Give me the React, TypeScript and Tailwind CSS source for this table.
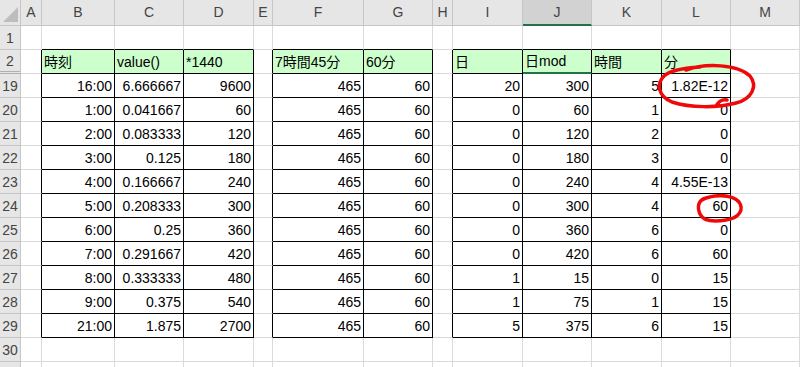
import React from 'react';

const colLetters = ['A', 'B', 'C', 'D', 'E', 'F', 'G', 'H', 'I', 'J', 'K', 'L', 'M'];
const rowLabels = ['1', '2', '19', '20', '21', '22', '23', '24', '25', '26', '27', '28', '29', '30', ''];

// columns that belong to a bordered table, and the column just left of each table
const tableCols = ['B', 'C', 'D', 'F', 'G', 'I', 'J', 'K', 'L'];
const edgeCols = ['A', 'E', 'H'];
const tableRows = ['2', '19', '20', '21', '22', '23', '24', '25', '26', '27', '28', '29'];

const headers: Record<string, string> = {
  B: '時刻',
  C: 'value()',
  D: '*1440',
  F: '7時間45分',
  G: '60分',
  I: '日',
  J: '日mod',
  K: '時間',
  L: '分',
};

const data: Record<string, string[]> = {
  '19': ['16:00', '6.666667', '9600', '465', '60', '20', '300', '5', '1.82E-12'],
  '20': ['1:00', '0.041667', '60', '465', '60', '0', '60', '1', '0'],
  '21': ['2:00', '0.083333', '120', '465', '60', '0', '120', '2', '0'],
  '22': ['3:00', '0.125', '180', '465', '60', '0', '180', '3', '0'],
  '23': ['4:00', '0.166667', '240', '465', '60', '0', '240', '4', '4.55E-13'],
  '24': ['5:00', '0.208333', '300', '465', '60', '0', '300', '4', '60'],
  '25': ['6:00', '0.25', '360', '465', '60', '0', '360', '6', '0'],
  '26': ['7:00', '0.291667', '420', '465', '60', '0', '420', '6', '60'],
  '27': ['8:00', '0.333333', '480', '465', '60', '1', '15', '0', '15'],
  '28': ['9:00', '0.375', '540', '465', '60', '1', '75', '1', '15'],
  '29': ['21:00', '1.875', '2700', '465', '60', '5', '375', '6', '15'],
};

function Cell({ row, col }: { row: string; col: string }) {
  const inTable = tableRows.includes(row) && tableCols.includes(col);
  const blackRight = inTable || (tableRows.includes(row) && edgeCols.includes(col));
  const blackBottom = inTable || (row === '1' && tableCols.includes(col));
  const isHeader = row === '2' && inTable;
  const active = row === '2' && col === 'J';

  let text = '';
  if (isHeader) text = headers[col];
  else if (inTable) text = data[row][tableCols.indexOf(col)];

  return (
    <div
      className={`flex h-[24px] items-center whitespace-nowrap border-r border-b pt-[1px] ${
        blackRight ? 'border-r-black' : 'border-r-[#dadada]'
      } ${active ? 'border-b-2 border-b-[#217346]' : blackBottom ? 'border-b-black' : 'border-b-[#dadada]'} ${
        isHeader ? 'justify-start bg-[#ccffcc] pl-[2px]' : 'justify-end pr-[2px]'
      }`}
    >
      {text}
    </div>
  );
}

export default function App() {
  return (
    <div className="relative h-[367px] w-[800px] overflow-hidden bg-white font-['Liberation_Sans','Noto_Sans_CJK_JP',sans-serif] text-[14px] text-black">
      <div className="grid grid-cols-[21px_21px_73px_69px_70px_19px_91px_69px_20px_70px_69px_70px_69px_69px]">
        {/* Column header row */}
        <div className="relative h-[26px] border-r border-b border-[#c6c6c6] bg-[#e6e6e6]">
          <svg className="absolute right-[2px] bottom-[3px]" width="15" height="15" viewBox="0 0 15 15">
            <polygon points="15,0 15,15 0,15" fill="#bdbdbd" />
          </svg>
        </div>
        {colLetters.map((c) => (
          <div
            key={c}
            className={`flex h-[26px] items-center justify-center border-r border-r-[#c6c6c6] text-[#444] ${
              c === 'J' ? 'border-b-2 border-b-[#217346] bg-[#d2d2d2]' : 'border-b border-b-[#c6c6c6] bg-[#e6e6e6]'
            }`}
          >
            {c}
          </div>
        ))}

        {rowLabels.map((r, i) => (
          <React.Fragment key={i}>
            <div
              className={`flex h-[24px] items-center justify-center border-r border-r-[#c6c6c6] bg-[#e6e6e6] pt-[1px] text-[#444] ${
                r === '2' ? 'border-b-[3px] border-double border-b-[#b0b0b0]' : 'border-b border-b-[#c6c6c6]'
              }`}
            >
              {r}
            </div>
            {colLetters.map((c) => (
              <Cell key={c} row={r} col={c} />
            ))}
          </React.Fragment>
        ))}
      </div>

      {/* hand-drawn red marks */}
      <svg className="pointer-events-none absolute inset-0" width="800" height="367" viewBox="0 0 800 367">
        <path
          d="M 686 70 C 705 63, 738 64, 750 76 C 758 86, 752 99, 736 103 C 718 108, 690 108, 672 102 C 658 96, 656 84, 664 76 C 670 70, 684 68, 700 67 M 716 106 C 719 101, 723 99, 727 100"
          fill="none"
          stroke="#ee0a0a"
          strokeWidth="3.5"
          strokeLinecap="round"
        />
        <path
          d="M 702 200 C 712 194, 732 194, 739 202 C 744 209, 740 218, 726 220 C 714 222, 703 221, 700 214 C 697 207, 698 200, 706 198 C 712 196, 720 195, 726 196"
          fill="none"
          stroke="#ee0a0a"
          strokeWidth="3.5"
          strokeLinecap="round"
        />
      </svg>
    </div>
  );
}
